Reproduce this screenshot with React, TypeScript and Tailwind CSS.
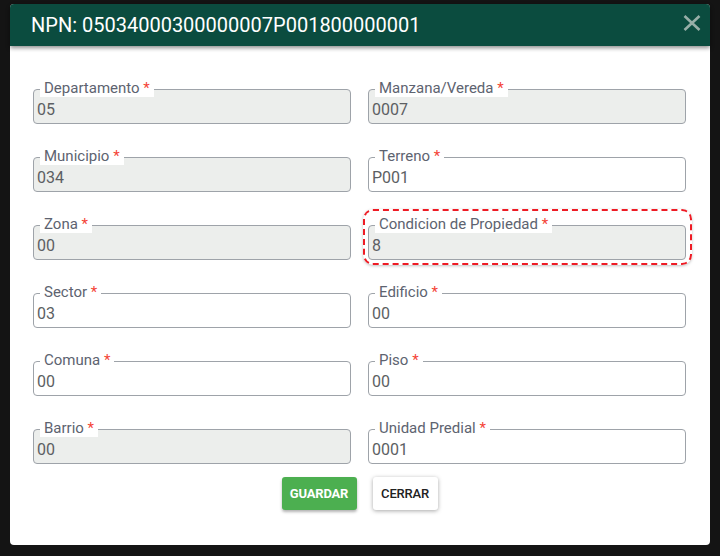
import React from "react";

type Field = { label: string; value: string; disabled: boolean; highlight?: boolean };

const left: Field[] = [
  { label: "Departamento", value: "05", disabled: true },
  { label: "Municipio", value: "034", disabled: true },
  { label: "Zona", value: "00", disabled: true },
  { label: "Sector", value: "03", disabled: false },
  { label: "Comuna", value: "00", disabled: false },
  { label: "Barrio", value: "00", disabled: true },
];
const right: Field[] = [
  { label: "Manzana/Vereda", value: "0007", disabled: true },
  { label: "Terreno", value: "P001", disabled: false },
  { label: "Condicion de Propiedad", value: "8", disabled: true, highlight: true },
  { label: "Edificio", value: "00", disabled: false },
  { label: "Piso", value: "00", disabled: false },
  { label: "Unidad Predial", value: "0001", disabled: false },
];

function Input({ f }: { f: Field }) {
  return (
    <div className="relative">
      {f.highlight && (
        <div className="absolute -left-[5px] -top-[16px] w-[329px] h-[56px] border-2 border-dashed border-[#ee1b24] rounded-[10px] shadow-[0_1px_3px_rgba(0,0,0,0.25)]" />
      )}
      <div
        className={
          "h-[35px] rounded-[4px] border border-[#9ea3a9] flex items-end pb-[3px] px-[3px] text-[16px] leading-[20px] text-[#5c5f63] " +
          (f.disabled ? "bg-[#eceeec]" : "bg-white")
        }
      >
        {f.value}
      </div>
      <div className="absolute left-[7px] -top-[9px] bg-white px-[4px] text-[15px] leading-[17px] text-[#5d6370] whitespace-nowrap">
        {f.label} <span className="text-[#f44336]">*</span>
      </div>
    </div>
  );
}

export default function App() {
  const rows = left.map((l, i) => [l, right[i]]);
  return (
    <div
      className="w-[720px] h-[556px] bg-[#141414] pt-[4px] pl-[10px] overflow-hidden"
      style={{ fontFamily: "Roboto, 'Liberation Sans', sans-serif" }}
    >
      <div className="w-[700px] h-[541px] bg-white rounded-[4px] flex flex-col">
        <div className="relative z-10 h-[42px] bg-[#0b4c3f] rounded-t-[4px] shadow-[0_2px_4px_rgba(0,0,0,0.45)] flex items-center justify-between pl-[21px] pr-[9px]">
          <div className="text-white text-[20px] leading-[24px]">NPN: 05034000300000007P001800000001</div>
          <svg width="18" height="16" viewBox="0 0 18 16" className="mt-[-5px]">
            <path d="M1.5 1 L16.5 15 M16.5 1 L1.5 15" stroke="#97aea7" strokeWidth="2.6" strokeLinecap="butt" />
          </svg>
        </div>
        <div className="pt-[43px] pl-[23px] pr-[24px]">
          <div className="grid grid-cols-2 gap-x-[17px] gap-y-[33px]">
            {rows.map(([l, r], i) => (
              <React.Fragment key={i}>
                <Input f={l} />
                <Input f={r} />
              </React.Fragment>
            ))}
          </div>
          <div className="flex justify-center gap-[16px] mt-[13px]">
            <button className="w-[75px] h-[33px] bg-[#4caf50] rounded-[3px] text-white font-bold text-[13px] tracking-[-0.2px] shadow-[0_2px_3px_rgba(0,0,0,0.3)]">
              GUARDAR
            </button>
            <button className="w-[65px] h-[33px] bg-white rounded-[3px] text-[#212121] font-medium text-[13px] tracking-[-0.2px] shadow-[0_1px_4px_rgba(0,0,0,0.35)]">
              CERRAR
            </button>
          </div>
        </div>
      </div>
    </div>
  );
}
